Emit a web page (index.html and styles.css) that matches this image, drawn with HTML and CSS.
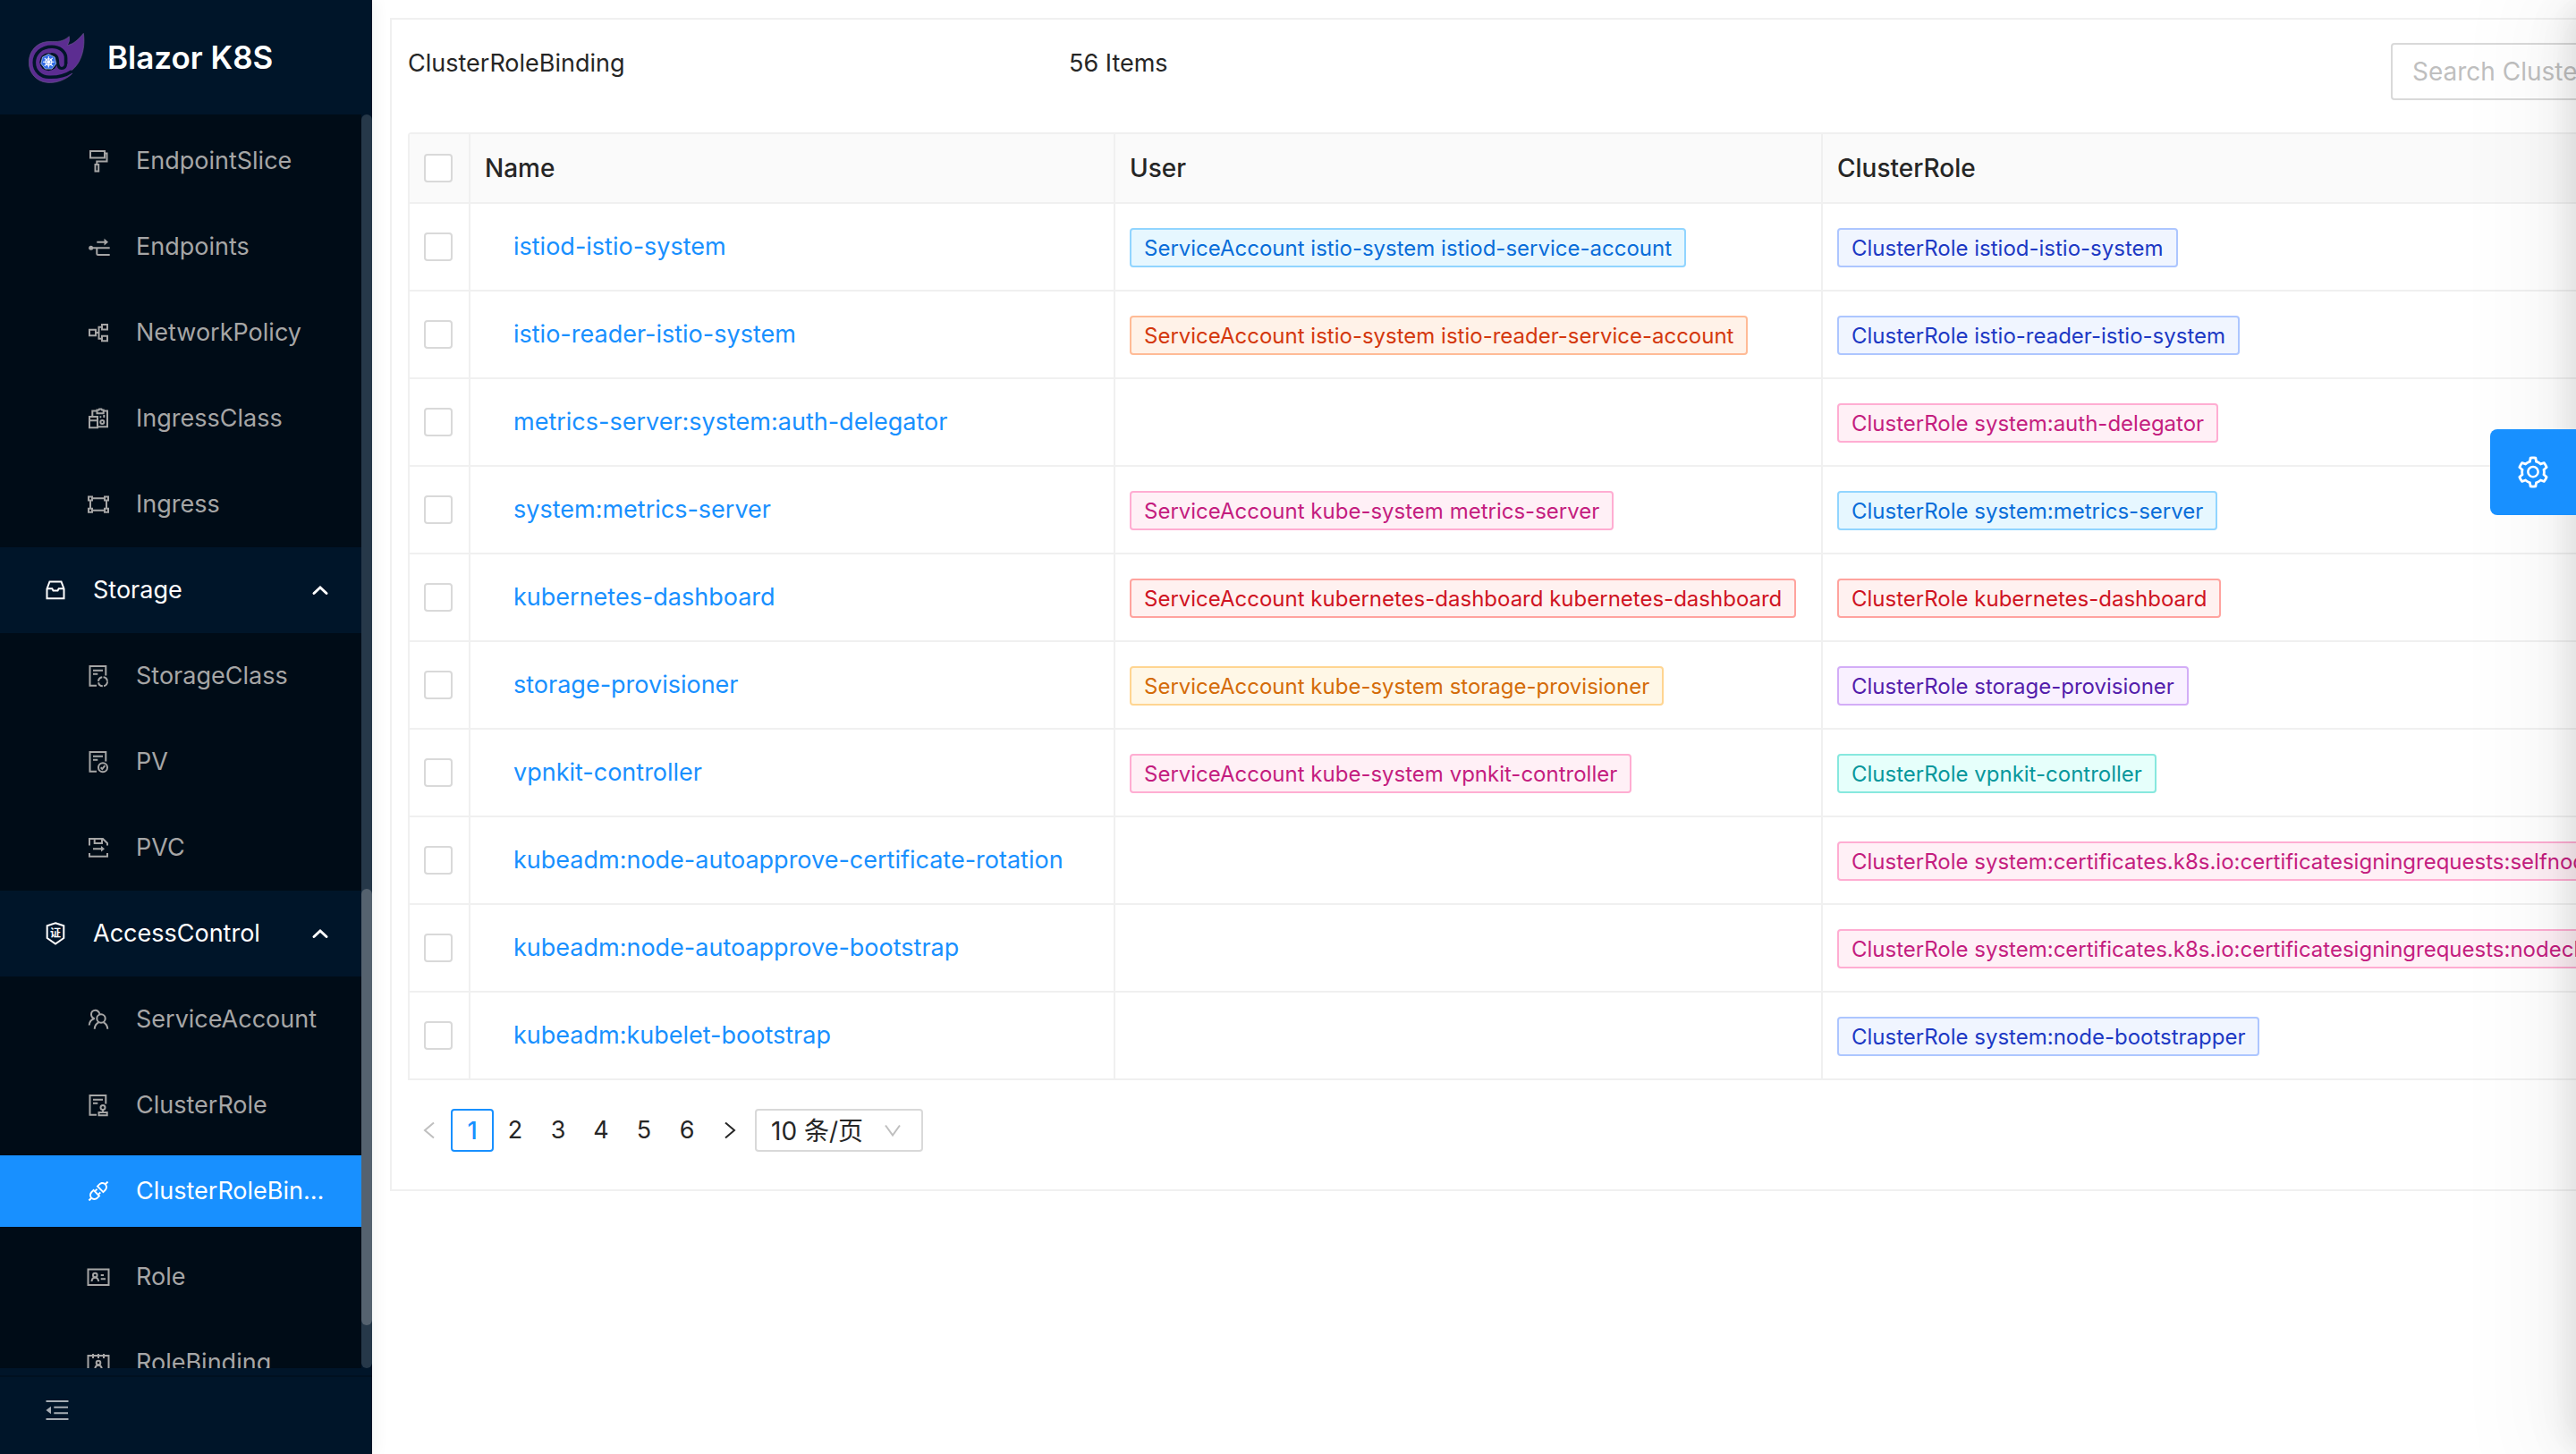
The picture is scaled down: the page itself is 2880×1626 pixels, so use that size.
FILE: index.html
```
<!DOCTYPE html>
<html lang="en">
<head>
<meta charset="utf-8">
<title>Blazor K8S</title>
<link rel="stylesheet" href="styles.css">
</head>
<body>
<div class="layout">
  <aside class="sider">
    <a class="brand" href="#">
      <svg class="brand-logo" viewBox="0 0 64 64" aria-hidden="true">
        <path fill="#5c2d91" stroke="#6b5a8c" stroke-width=".6" d="M61.3 5.3C62.500 12 62.500 24 57.500 34.500C54 42 49.500 46 46 48L48.700 50.300C42 57 31 61.500 20.300 60.300C8.500 59 .3 49.500.3 38C.3 25 9 16 20 14.700C28 14 37 16.500 45.300 8.700Q46.500 14 43.300 18.700C51 17 55.500 12 61.300 5.300Z"/>
        <path fill="none" stroke="#001529" stroke-width="3.600" stroke-linecap="round" d="M41.600 39V33C41.600 25 34 20.300 26 20.300C14 20.300 6.300 28 6.300 38C6.300 48 14 54.300 23 54.300C32 54.500 40 53.500 47 48.500"/>
        <path fill="none" stroke="#001529" stroke-width="3.200" stroke-linecap="round" d="M26 28.500C31 29 32.500 32 32.500 36C32.500 41 33 44.500 37 44.500C40.500 44.500 41.600 42 41.600 38"/>
        <circle cx="22.300" cy="37.300" r="10" fill="#001529"/>
        <path fill="#326ce5" stroke="#d8e2f8" stroke-width=".6" d="M22.300 28.600L29.100 31.900L30.800 39.200L26.100 45.100H18.500L13.800 39.200L15.500 31.900Z"/>
        <g fill="none" stroke="#fff" stroke-width="1.100"><circle cx="22.300" cy="37.300" r="3.600"/><path d="M22.300 31V43.500M16 37.300H28.600M17.800 32.800L26.800 41.800M26.800 32.800L17.800 41.800"/></g>
      </svg>
      <span>Blazor K8S</span>
    </a>
    <div class="menu-area">
      <nav class="menu">
        <ul class="submenu">
          <li><a class="item" href="#"><svg class="icon" viewBox="0 0 28 28"><path d="M5 3H21V10.500H5ZM21 5.500H23.500V14.500H12.300V18M10.500 18H14.200V25.500H10.500Z"/></svg><span>EndpointSlice</span></a></li>
          <li><a class="item" href="#"><svg class="icon" viewBox="0 0 28 28"><path d="M7 15.300H26.700M12.300 15.300V21.500Q12.300 23 13.800 23H26.700M12.300 8.700H21"/><path class="solid" d="M20.500 4.700L25 8.700L20.500 12.500Z"/><circle class="solid" cx="5.700" cy="15.300" r="2.500"/></svg><span>Endpoints</span></a></li>
          <li><a class="item" href="#"><svg class="icon" viewBox="0 0 28 28"><path d="M4 10.700H11V17.300H4ZM18 5H24V10.500H18ZM18 17.700H24V23.300H18ZM11 14H14.500M18 7.700H14.500V20.700H18"/></svg><span>NetworkPolicy</span></a></li>
          <li><a class="item" href="#"><svg class="icon" viewBox="0 0 28 28"><path d="M4 12H13V24.300H4ZM4 16.300H13M7.300 11.500V5.500H12.500M19.500 5.500H24V23.300H13.500M12.500 4.500H14.500L15 3.500H17.500L18 4.500H19.700V8.300H12.500ZM15.500 12.300H17.300M20.300 10V13"/><circle cx="18.300" cy="18" r="2"/></svg><span>IngressClass</span></a></li>
          <li><a class="item" href="#"><svg class="icon" viewBox="0 0 28 28"><path d="M3 5.500H7V9.500H3ZM21 5.500H25V9.500H21ZM3 18.700H7V22.700H3ZM21 18.700H25V22.700H21ZM7 7.300H21M7 20.700H21M5 9.500V18.700M23 9.500V18.700"/></svg><span>Ingress</span></a></li>
        </ul>
        <button class="item group" type="button"><svg class="icon" viewBox="0 0 28 28"><path d="M4.500 12.500L7.500 4.500H20.500L23.500 12.500V23.300H4.500ZM4.500 12.300H10.300L11.500 14.500H16.500L17.700 12.300H23.500"/></svg><span>Storage</span><svg class="caret" viewBox="0 0 20 20"><path d="M3 13.500L10 7L17 13.500"/></svg></button>
        <ul class="submenu">
          <li><a class="item" href="#"><svg class="icon" viewBox="0 0 28 28"><path d="M12 24.700H4.500V3H22.300V13.500M8 7.700H19M8 11.700H13.300"/><circle cx="19" cy="20.300" r="5" stroke-dasharray="6.500 1.350"/></svg><span>StorageClass</span></a></li>
          <li><a class="item" href="#"><svg class="icon" viewBox="0 0 28 28"><path d="M12 24.700H4.500V3H22.300V13.500M8 7.700H19M8 11.700H13.300M16.700 20.300L18.300 22L21.300 18.200"/><circle cx="19" cy="20.300" r="5"/></svg><span>PV</span></a></li>
          <li><a class="item" href="#"><svg class="icon" viewBox="0 0 28 28"><path d="M4 11.500V4H19L24 9V11.500M4 20V23.700H24V20M9.700 4V9H18V4M8 15.300H18"/><path class="solid" d="M17 12L21 15.300L17 18.600Z"/></svg><span>PVC</span></a></li>
        </ul>
        <button class="item group" type="button"><svg class="icon" viewBox="0 0 28 28"><path d="M14 2.300L23.300 5.300V19L14 25.500L4.700 19V5.300Z"/><text class="seal" x="14" y="18">证</text></svg><span>AccessControl</span><svg class="caret" viewBox="0 0 20 20"><path d="M3 13.500L10 7L17 13.500"/></svg></button>
        <ul class="submenu">
          <li><a class="item" href="#"><svg class="icon" viewBox="0 0 28 28"><circle cx="17" cy="13" r="4.700"/><path d="M9.700 24.700C10 20.500 12 18.500 14.500 17.200M24.300 24.700C24 20.500 22 18.500 19.500 17.200M15.500 8C14.500 5 12.500 3.700 10.500 3.700C8 3.700 6 5.800 6 8.300C6 10.500 7.300 12.500 9.700 13C6 14 4 16.500 3.700 20.500"/></svg><span>ServiceAccount</span></a></li>
          <li><a class="item" href="#"><svg class="icon" viewBox="0 0 28 28"><path d="M12 24.700H4.500V3H22.300V12.500M8 7.700H19M8 11.700H13.300M19 19V22M14.500 22H23.700V25.300H14.500Z"/><circle cx="19" cy="16.500" r="2.500"/></svg><span>ClusterRole</span></a></li>
          <li><a class="item selected" href="#" aria-current="page"><svg class="icon" viewBox="0 0 1024 1024"><path class="solid" d="M917.7 148.8l-42.4-42.4c-1.6-1.6-3.6-2.3-5.7-2.3s-4.1.8-5.7 2.3l-76.1 76.1a199.27 199.27 0 00-112.1-34.3c-51.2 0-102.4 19.5-141.5 58.6L432.3 308.700a8.030 8.030 0 000 11.300L704 591.700c1.600 1.600 3.600 2.300 5.700 2.300 2 0 4.100-.8 5.700-2.300l101.900-101.900c68.900-69 77-175.700 24.300-253.500l76.100-76.100c3.100-3.200 3.100-8.300 0-11.400zM769.100 441.700l-59.400 59.400-186.800-186.800 59.400-59.400c24.900-24.900 58.100-38.700 93.400-38.700 35.300 0 68.400 13.700 93.400 38.700 24.900 24.900 38.700 58.100 38.700 93.400 0 35.300-13.800 68.400-38.700 93.400zm-190.200 105a8.030 8.030 0 00-11.300 0L501 613.300 410.700 523l66.700-66.700c3.100-3.100 3.100-8.200 0-11.300L441 408.600a8.030 8.030 0 00-11.300 0L363 475.300l-43-43a7.850 7.850 0 00-5.700-2.300c-2 0-4.100.8-5.700 2.300L206.800 534.200c-68.900 69-77 175.700-24.300 253.500l-76.100 76.100a8.030 8.030 0 000 11.300l42.400 42.400c1.600 1.600 3.600 2.300 5.700 2.300s4.100-.8 5.700-2.300l76.100-76.100c33.700 22.900 72.900 34.300 112.100 34.300 51.200 0 102.400-19.500 141.500-58.600l101.900-101.900c3.100-3.100 3.100-8.200 0-11.300l-43-43 66.700-66.700c3.100-3.100 3.100-8.200 0-11.300l-36.600-36.200zM441.700 769.100a131.320 131.320 0 01-93.400 38.700c-35.300 0-68.400-13.700-93.400-38.700a131.320 131.320 0 01-38.700-93.400c0-35.300 13.700-68.400 38.700-93.400l59.400-59.400 186.800 186.800-59.400 59.400z"/></svg><span>ClusterRoleBinding</span></a></li>
          <li><a class="item" href="#"><svg class="icon" viewBox="0 0 28 28"><path d="M2.500 5.500H25.500V23H2.500ZM16.700 12H20M16.700 16.300H22M6.500 19C6.700 16.300 8.300 14.700 10.300 14.700C12.300 14.700 13.900 16.300 14.200 19"/><circle cx="10.300" cy="12" r="2.300"/></svg><span>Role</span></a></li>
          <li><a class="item" href="#"><svg class="icon" viewBox="0 0 28 28"><path d="M2.500 6H25.500V24.500H2.500ZM8 4V9M14 4V9M20 4V9M10.200 21C10.400 18.300 12 16.700 14 16.700C16 16.700 17.600 18.300 17.900 21"/><circle cx="14" cy="14" r="2.300"/></svg><span>RoleBinding</span></a></li>
        </ul>
      </nav>
      <div class="track"><div class="thumb" style="top:61.8%;height:34.8%"></div></div>
    </div>
    <div class="sider-foot">
      <button class="collapse" type="button" aria-label="Collapse menu"><svg viewBox="0 0 32 32"><path d="M3.500 6H28.500M12.300 12.700H28M12.300 19.300H28M3.500 26H28.500"/><path class="solid" d="M3.500 16L9 11.700V20.300Z"/></svg></button>
    </div>
  </aside>

  <main class="content">
    <section class="card">
      <header class="toolbar">
        <span>ClusterRoleBinding</span>
        <span>56 Items</span>
        <span></span>
        <input class="search" type="text" placeholder="Search ClusterRoleBinding" aria-label="Search ClusterRoleBinding">
      </header>
      <table class="grid">
        <colgroup><col class="c-check"><col class="c-name"><col class="c-user"><col></colgroup>
        <thead>
          <tr><th><input type="checkbox" aria-label="Select all"></th><th>Name</th><th>User</th><th>ClusterRole</th></tr>
        </thead>
        <tbody>
          <tr><td><input type="checkbox" aria-label="Select row"></td><td><a href="#">istiod-istio-system</a></td><td><span class="tag blue">ServiceAccount istio-system istiod-service-account</span></td><td><span class="tag geekblue">ClusterRole istiod-istio-system</span></td></tr>
          <tr><td><input type="checkbox" aria-label="Select row"></td><td><a href="#">istio-reader-istio-system</a></td><td><span class="tag volcano">ServiceAccount istio-system istio-reader-service-account</span></td><td><span class="tag geekblue">ClusterRole istio-reader-istio-system</span></td></tr>
          <tr><td><input type="checkbox" aria-label="Select row"></td><td><a href="#">metrics-server:system:auth-delegator</a></td><td></td><td><span class="tag magenta">ClusterRole system:auth-delegator</span></td></tr>
          <tr><td><input type="checkbox" aria-label="Select row"></td><td><a href="#">system:metrics-server</a></td><td><span class="tag magenta">ServiceAccount kube-system metrics-server</span></td><td><span class="tag blue">ClusterRole system:metrics-server</span></td></tr>
          <tr><td><input type="checkbox" aria-label="Select row"></td><td><a href="#">kubernetes-dashboard</a></td><td><span class="tag red">ServiceAccount kubernetes-dashboard kubernetes-dashboard</span></td><td><span class="tag red">ClusterRole kubernetes-dashboard</span></td></tr>
          <tr><td><input type="checkbox" aria-label="Select row"></td><td><a href="#">storage-provisioner</a></td><td><span class="tag orange">ServiceAccount kube-system storage-provisioner</span></td><td><span class="tag purple">ClusterRole storage-provisioner</span></td></tr>
          <tr><td><input type="checkbox" aria-label="Select row"></td><td><a href="#">vpnkit-controller</a></td><td><span class="tag magenta">ServiceAccount kube-system vpnkit-controller</span></td><td><span class="tag cyan">ClusterRole vpnkit-controller</span></td></tr>
          <tr><td><input type="checkbox" aria-label="Select row"></td><td><a href="#">kubeadm:node-autoapprove-certificate-rotation</a></td><td></td><td><span class="tag magenta">ClusterRole system:certificates.k8s.io:certificatesigningrequests:selfnodeclient</span></td></tr>
          <tr><td><input type="checkbox" aria-label="Select row"></td><td><a href="#">kubeadm:node-autoapprove-bootstrap</a></td><td></td><td><span class="tag magenta">ClusterRole system:certificates.k8s.io:certificatesigningrequests:nodeclient</span></td></tr>
          <tr><td><input type="checkbox" aria-label="Select row"></td><td><a href="#">kubeadm:kubelet-bootstrap</a></td><td></td><td><span class="tag geekblue">ClusterRole system:node-bootstrapper</span></td></tr>
        </tbody>
      </table>
      <nav class="pager" aria-label="Pages">
        <button type="button" disabled aria-label="Previous page"><svg viewBox="0 0 24 24"><path d="M17 3.500L7 12L17 20.500"/></svg></button>
        <button type="button" class="current">1</button>
        <button type="button">2</button>
        <button type="button">3</button>
        <button type="button">4</button>
        <button type="button">5</button>
        <button type="button">6</button>
        <button type="button" aria-label="Next page"><svg viewBox="0 0 24 24"><path d="M7 3.500L17 12L7 20.500"/></svg></button>
        <div class="size">
          <select aria-label="Page size"><option>10 条/页</option></select>
          <svg viewBox="0 0 24 24"><path d="M4 6.500L12 17.500L20 6.500"/></svg>
        </div>
      </nav>
    </section>
  </main>
</div>

<aside class="drawer"></aside>
<button class="settings" type="button" aria-label="Settings"><svg viewBox="0 0 1024 1024"><path d="M924.8 625.7l-65.5-56c3.1-19 4.7-38.4 4.7-57.8s-1.6-38.8-4.7-57.8l65.5-56a32.03 32.03 0 009.3-35.2l-.9-2.6a443.74 443.74 0 00-79.7-137.9l-1.8-2.1a32.12 32.12 0 00-35.1-9.5l-81.3 28.9c-30-24.6-63.5-44-99.7-57.6l-15.7-85a32.05 32.05 0 00-25.8-25.7l-2.7-.5c-52.1-9.4-106.9-9.4-159 0l-2.7.5a32.05 32.05 0 00-25.8 25.7l-15.8 85.4a351.86 351.86 0 00-99 57.4l-81.9-29.1a32 32 0 00-35.1 9.5l-1.8 2.1a446.02 446.02 0 00-79.7 137.9l-.9 2.6c-4.5 12.5-.8 26.5 9.3 35.2l66.3 56.6c-3.1 18.8-4.6 38-4.6 57.1 0 19.2 1.5 38.4 4.6 57.1L99 625.5a32.03 32.03 0 00-9.3 35.2l.9 2.6c18.1 50.4 44.9 96.9 79.7 137.9l1.8 2.1a32.12 32.12 0 0035.1 9.5l81.9-29.1c29.8 24.5 63.1 43.9 99 57.4l15.8 85.4a32.05 32.05 0 0025.8 25.7l2.7.5a449.4 449.4 0 00159 0l2.7-.5a32.05 32.05 0 0025.8-25.7l15.7-85a350 350 0 0099.7-57.6l81.3 28.9a32 32 0 0035.1-9.5l1.8-2.1c34.8-41.1 61.6-87.5 79.7-137.9l.9-2.6c4.5-12.3.8-26.3-9.3-35zM788.3 465.9c2.5 15.1 3.8 30.6 3.8 46.1s-1.3 31-3.8 46.1l-6.6 40.1 74.7 63.9a370.03 370.03 0 01-42.6 73.6L721 702.8l-31.4 25.8c-23.9 19.6-50.5 35-79.3 45.8l-38.1 14.3-17.9 97a377.5 377.5 0 01-85 0l-17.9-97.2-37.8-14.5c-28.5-10.8-55-26.2-78.7-45.7l-31.4-25.9-93.4 33.2c-17-22.9-31.2-47.6-42.6-73.6l75.5-64.5-6.5-40c-2.4-14.9-3.7-30.3-3.7-45.5 0-15.3 1.2-30.6 3.7-45.5l6.5-40-75.5-64.5c11.3-26.1 25.6-50.7 42.6-73.6l93.4 33.2 31.4-25.9c23.7-19.5 50.2-34.9 78.7-45.7l37.9-14.3 17.9-97.2c28.1-3.2 56.8-3.2 85 0l17.9 97 38.1 14.3c28.7 10.8 55.4 26.2 79.3 45.8l31.4 25.8 92.8-32.9c17 22.9 31.2 47.6 42.6 73.6L781.8 426l6.5 39.9zM512 326c-97.2 0-176 78.8-176 176s78.8 176 176 176 176-78.8 176-176-78.8-176-176-176zm79.2 255.2A111.6 111.6 0 01512 614c-29.9 0-58-11.7-79.2-32.8A111.6 111.6 0 01400 502c0-29.9 11.7-58 32.8-79.2C454 401.6 482.1 390 512 390c29.9 0 58 11.6 79.2 32.8A111.6 111.6 0 01624 502c0 29.9-11.7 58-32.8 79.2z"/></svg></button>
</body>
</html>
```
FILE: styles.css
```
* { box-sizing: border-box; }

body {
  margin: 0;
  font: 27px/46px Inter, "Noto Sans CJK SC", sans-serif;
  color: #262626;
  background: #fff;
}

button, input, select { font: inherit; color: inherit; margin: 0; }
button { border: 0; background: none; padding: 0; cursor: pointer; }
a { color: #1890ff; text-decoration: none; }
ul { list-style: none; margin: 0; padding: 0; }
svg { display: block; fill: none; stroke: currentColor; flex: none; }
.solid { fill: currentColor; stroke: none; }

.layout { display: flex; height: 100vh; overflow: hidden; }

/* Sidebar */
.sider {
  position: relative;
  z-index: 1;
  flex: 0 0 416px;
  min-width: 0;
  display: flex;
  flex-direction: column;
  background: #001529;
  box-shadow: 4px 0 16px rgba(29, 35, 41, .05);
}
.brand {
  flex: 0 0 128px;
  display: flex;
  align-items: center;
  gap: 24px;
  padding: 0 32px;
  font-size: 35px;
  font-weight: 600;
  color: #fff;
}
.brand-logo { width: 64px; height: 64px; stroke: none; }

.menu-area { flex: 1; min-height: 0; display: flex; }
.menu { flex: 1; min-width: 0; overflow: hidden; background: #000c17; }
.submenu li { padding: 8px 0; }
.submenu:first-child { padding-top: 4px; }
.item {
  display: flex;
  align-items: center;
  gap: 28px;
  width: 100%;
  height: 80px;
  padding: 0 28px 0 96px;
  color: #a6a6a6;
  white-space: nowrap;
}
.item span { overflow: hidden; text-overflow: ellipsis; }
.group {
  height: 96px;
  padding: 0 36px 0 48px;
  background: #001529;
  color: #fff;
  text-align: left;
}
.group span { flex: 1; }
.selected { background: #1890ff; color: #fff; }
.icon { width: 28px; height: 28px; stroke-width: 2; }
.caret { width: 20px; height: 20px; stroke-width: 3; stroke-linecap: round; }
.seal {
  fill: currentColor;
  stroke: none;
  font-size: 12px;
  font-weight: 700;
  text-anchor: middle;
}

.track { position: relative; flex: 0 0 12px; border-radius: 6px; background: #263849; }
.thumb { position: absolute; width: 100%; border-radius: 6px; background: #55626f; }

.sider-foot { flex: 0 0 96px; padding-top: 8px; }
.collapse {
  display: flex;
  align-items: center;
  width: 100%;
  height: 76px;
  padding: 0 48px;
  border-top: 2px solid #001020;
  color: #a6adb4;
}
.collapse svg { width: 32px; height: 32px; stroke-width: 2; }

/* Content */
.content { flex: 1; min-width: 0; padding: 20px 0 0 20px; overflow: hidden; }
.card {
  width: 123%;
  padding: 26px 18px 42px;
  border: 2px solid #f0f0f0;
}
.toolbar {
  display: grid;
  grid-template-columns: repeat(3, 739px) 1fr;
  align-items: start;
  margin-bottom: 36px;
}
.search {
  width: 100%;
  height: 64px;
  padding: 0 22px;
  border: 2px solid #d9d9d9;
  border-radius: 4px;
  background: #fff;
  font-size: 28px;
}
.search::placeholder { color: #bfbfbf; opacity: 1; }

.grid {
  width: 100%;
  table-layout: fixed;
  border-collapse: separate;
  border-spacing: 0;
  border: 2px solid #f0f0f0;
  border-width: 2px 0 0 2px;
  border-radius: 4px 0 0 0;
}
.c-check { width: 68px; }
.c-name { width: 721px; }
.c-user { width: 791px; }
th, td {
  height: 98px;
  padding: 0 16px;
  border: 2px solid #f0f0f0;
  border-width: 0 2px 2px 0;
  text-align: left;
  white-space: nowrap;
}
th { height: 78px; background: #fafafa; font-size: 28px; font-weight: 500; }
td a { padding-left: 32px; }
input[type="checkbox"] {
  display: block;
  appearance: none;
  width: 32px;
  height: 32px;
  border: 2px solid #d9d9d9;
  border-radius: 4px;
  background: #fff;
}

.tag {
  display: block;
  width: max-content;
  height: 44px;
  margin-top: 2px;
  padding: 0 14px;
  border: 2px solid;
  border-radius: 4px;
  font-size: 24px;
  line-height: 42px;
}
.blue { color: #096dd9; background: #e6f7ff; border-color: #91d5ff; }
.geekblue { color: #1d39c4; background: #f0f5ff; border-color: #adc6ff; }
.volcano { color: #d4380d; background: #fff2e8; border-color: #ffbb96; }
.magenta { color: #c41d7f; background: #fff0f6; border-color: #ffadd2; }
.red { color: #cf1322; background: #fff1f0; border-color: #ffa39e; }
.orange { color: #d46b08; background: #fff7e6; border-color: #ffd591; }
.purple { color: #531dab; background: #f9f0ff; border-color: #d3adf7; }
.cyan { color: #08979c; background: #e6fffb; border-color: #87e8de; }

/* Pagination */
.pager { display: flex; margin-top: 32px; }
.pager button {
  display: grid;
  place-items: center;
  width: 48px;
  height: 48px;
  border-radius: 4px;
}
.pager button:disabled { color: #bfbfbf; }
.pager .current { border: 2px solid #1890ff; color: #1890ff; font-weight: 500; }
.pager svg { width: 24px; height: 24px; stroke-width: 2; }
.size { display: grid; align-items: center; width: 188px; margin-left: 4px; }
.size > * { grid-area: 1 / 1; }
.size select {
  appearance: none;
  width: 100%;
  height: 48px;
  padding: 0 16px;
  border: 2px solid #d9d9d9;
  border-radius: 4px;
  background: #fff;
  font-size: 28px;
}
.size svg { justify-self: end; margin-right: 22px; color: #bfbfbf; pointer-events: none; }

/* Settings drawer, closed beyond the right edge */
.drawer {
  position: fixed;
  z-index: 2;
  top: 0;
  left: 100%;
  width: 600px;
  height: 100%;
  box-shadow:
    -12px 0 32px -8px rgba(0, 0, 0, .08),
    -18px 0 56px rgba(0, 0, 0, .06),
    -24px 0 96px 32px rgba(0, 0, 0, .03);
}
.settings {
  position: fixed;
  z-index: 3;
  top: 480px;
  right: 0;
  display: grid;
  place-items: center;
  width: 96px;
  height: 96px;
  border-radius: 8px 0 0 8px;
  background: #1890ff;
  color: #fff;
}
.settings svg { width: 40px; height: 40px; fill: currentColor; stroke: none; }
```
